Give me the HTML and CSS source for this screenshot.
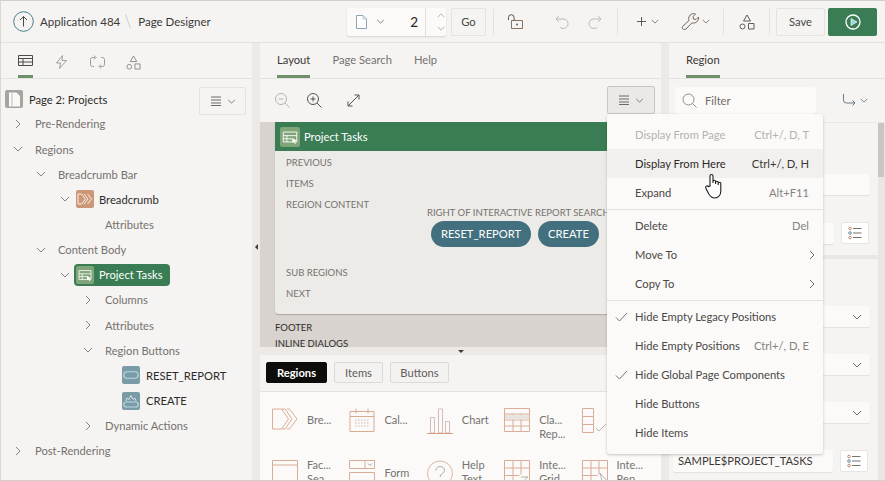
FILE: index.html
```html
<!DOCTYPE html>
<html lang="en">
<head>
<meta charset="utf-8">
<title>Page Designer</title>
<link rel="stylesheet" href="styles.css">
</head>
<body>
<svg class="defs" width="0" height="0">
  <symbol id="chev-d" viewBox="0 0 10 6"><path d="M1 1l4 4 4-4" fill="none" stroke="currentColor"/></symbol>
  <symbol id="chev-r" viewBox="0 0 6 10"><path d="M1 1l4 4-4 4" fill="none" stroke="currentColor"/></symbol>
  <symbol id="menu" viewBox="0 0 12 10"><path d="M1 1h10M1 4h10M1 7h10M1 9.500h10" fill="none" stroke="currentColor"/></symbol>
  <symbol id="shapes" viewBox="0 0 16 16"><path d="M8 1l3.500 6h-7z M9.500 9.500h5.500v5.500h-5.500z" fill="none" stroke="currentColor"/><circle cx="3.500" cy="12.500" r="2.500" fill="none" stroke="currentColor"/></symbol>
  <symbol id="region" viewBox="0 0 20 20"><g fill="none" stroke="#fff"><path d="M2.500 4.500h15v11h-15zM2.500 8.500h15M6.500 8.500v7M2.500 12h10"/></g><path d="M12.500 11l5 3-2 .8 1 2.500-1 .4-1-2.500-2 1z" fill="#fff"/></symbol>
  <symbol id="list" viewBox="0 0 14 14"><g fill="none"><circle cx="2" cy="2.500" r="1.300" stroke="#b98a70"/><circle cx="2" cy="7" r="1.300" stroke="#6b8aa0"/><circle cx="2" cy="11.500" r="1.300" stroke="#b98a70"/><path d="M5 2.500h8.500M5 7h8.500M5 11.500h8.500" stroke="#77736f"/></g></symbol>
</svg>

<div class="app">
  <header class="topbar">
    <svg class="up" width="21" height="21" viewBox="0 0 21 21"><circle cx="10.500" cy="10.500" r="9.800" fill="none" stroke="#4b7c8a"/><path d="M10.500 15.500v-10M7 9l3.500-3.500L14 9" fill="none" stroke="#4a4846"/></svg>
    <span class="crumb">Application 484</span>
    <svg class="slash" width="6" height="15" viewBox="0 0 6 15"><path d="M.5.500l5 14" stroke="#cfccc8" fill="none"/></svg>
    <span class="crumb">Page Designer</span>

    <div class="tools">
      <div class="pagepick">
        <svg width="11" height="14" viewBox="0 0 11 14"><path d="M.5.500h6.500l3.500 3.500v9.500h-10z" fill="#fff" stroke="#8da3b3"/><path d="M7 .5v3.500h3.500" fill="none" stroke="#b9c6cf"/></svg>
        <svg class="ch" width="9" height="5"><use href="#chev-d"/></svg>
        <span class="pagenum">2</span>
        <span class="spin">
          <svg class="ch ltg" width="8" height="5"><use href="#chev-d" transform="rotate(180 4 2.500)"/></svg>
          <svg class="ch ltg" width="8" height="5"><use href="#chev-d"/></svg>
        </span>
      </div>
      <button class="btn go">Go</button>
      <i class="vr v1"></i>
      <svg class="ic unlock" width="15" height="15" viewBox="0 0 15 15"><path d="M.5 6V3.500a2.800 2.800 0 0 1 5.600 0V6" fill="none" stroke="#55524f"/><path d="M3.500 6.500h11v8h-11z" fill="none" stroke="#8b6f63"/><circle cx="9" cy="10.500" r=".9" fill="#55524f"/></svg>
      <svg class="ic undo" width="15" height="14" viewBox="0 0 15 14"><path d="M4 1L1 4l3 3M1 4h8a5 4.800 0 1 1-4 8.500" fill="none" stroke="#bdbab6"/></svg>
      <svg class="ic redo" width="15" height="14" viewBox="0 0 15 14"><path d="M11 1l3 3-3 3M14 4H6a5 4.800 0 1 0 4 8.500" fill="none" stroke="#bdbab6"/></svg>
      <i class="vr v2"></i>
      <svg class="ic plus" width="9" height="9" viewBox="0 0 9 9"><path d="M4.500 0v9M0 4.500h9" stroke="#5c5a57" fill="none"/></svg>
      <svg class="ch c-plus" width="8" height="5"><use href="#chev-d"/></svg>
      <svg class="ic wrench" width="19" height="19" viewBox="0 0 19 19"><path d="M1.500 14.500L8 8.500C7 5.500 8.500 2 12.500 1.500c1 0 1.500.2 2 .5L12 4.500l.5 2.500 2.500.5L17.500 5c.5 3-1.500 6-5 6-.5 0-1 0-1.500-.2L5 17c-2 1.500-4.800-.5-3.500-2.500z" fill="none" stroke="#77605a"/></svg>
      <svg class="ch c-wr" width="8" height="5"><use href="#chev-d"/></svg>
      <i class="vr v3"></i>
      <svg class="ic sh" width="16" height="16"><use href="#shapes"/></svg>
      <i class="vr v4"></i>
      <button class="btn save">Save</button>
      <button class="run" aria-label="Run"><svg width="16" height="16" viewBox="0 0 16 16"><circle cx="8" cy="8" r="7" fill="none" stroke="#fff" stroke-width="1.300"/><path d="M6 4.500L12 8l-6 3.500z" fill="#9bd8e0" stroke="#fff" stroke-width=".6"/></svg></button>
    </div>
  </header>

  <main class="main">
    <aside class="left">
      <div class="tabs lefttabs">
        <span class="itab on"><svg width="15" height="11" viewBox="0 0 15 11"><path d="M.5.500h14v10H.5zM.5 3.500h14M.5 7h14M5 3.500V10.500" fill="none" stroke="#4c4a48"/></svg></span>
        <span class="itab"><svg width="11" height="14" viewBox="0 0 11 14"><path d="M6.500.500L.5 8h4l-1 5.500L10.500 5.500h-4.500z" fill="none" stroke="#a19e9b"/></svg></span>
        <span class="itab"><svg width="15" height="14" viewBox="0 0 15 14"><path d="M5 2.500H2.500a2 2 0 0 0-2 2v5a2 2 0 0 0 2 2H4M10 11.500h2.500a2 2 0 0 0 2-2v-5a2 2 0 0 0-2-2H11M4 .5l2 2-2 2M11 9.500l-2 2 2 2" fill="none" stroke="#a09a9e"/></svg></span>
        <span class="itab"><svg width="15" height="15" class="muted"><use href="#shapes"/></svg></span>
      </div>
      <div class="treehead">
        <span class="pageicon"><svg width="13" height="15" viewBox="0 0 13 15"><path d="M1 .5h7.500l3.500 3.500v10.500H1z" fill="#fbf9f7"/><path d="M4 .5v14" stroke="#c9b8b2"/></svg></span>
        <span class="pagetitle">Page 2: Projects</span>
        <button class="menubtn"><svg class="gly" width="12" height="10"><use href="#menu"/></svg><svg class="ch" width="9" height="5"><use href="#chev-d"/></svg></button>
      </div>
      <ul class="tree">
        <li class="row l0"><svg class="tw" width="6" height="10"><use href="#chev-r"/></svg>Pre-Rendering</li>
        <li class="row l0"><svg class="tw" width="10" height="6"><use href="#chev-d"/></svg>Regions</li>
        <li class="row l1"><svg class="tw" width="10" height="6"><use href="#chev-d"/></svg>Breadcrumb Bar</li>
        <li class="row l2"><svg class="tw" width="10" height="6"><use href="#chev-d"/></svg><span class="nodeicon tan"><svg width="16" height="12" viewBox="0 0 16 12"><path d="M1 1h3.500l4 5-4 5H1l0-10zM7 1l4 5-4 5M10.500 1l4 5-4 5" fill="none" stroke="#fbeee6"/></svg></span><b>Breadcrumb</b></li>
        <li class="row l3 noarrow">Attributes</li>
        <li class="row l1"><svg class="tw" width="10" height="6"><use href="#chev-d"/></svg>Content Body</li>
        <li class="row l2"><svg class="tw" width="10" height="6"><use href="#chev-d"/></svg><span class="pill"><span class="nodeicon gr"><svg width="16" height="16"><use href="#region"/></svg></span>Project Tasks</span></li>
        <li class="row l3"><svg class="tw" width="6" height="10"><use href="#chev-r"/></svg>Columns</li>
        <li class="row l3"><svg class="tw" width="6" height="10"><use href="#chev-r"/></svg>Attributes</li>
        <li class="row l3"><svg class="tw" width="10" height="6"><use href="#chev-d"/></svg>Region Buttons</li>
        <li class="row l4"><span class="nodeicon teal"><svg width="16" height="8" viewBox="0 0 16 8"><rect x=".75" y=".75" width="14.500" height="6.500" rx="3.200" fill="none" stroke="#b9d9e3" stroke-width="1.200"/></svg></span><b>RESET_REPORT</b></li>
        <li class="row l4"><span class="nodeicon teal"><svg width="16" height="14" viewBox="0 0 16 14"><rect x=".75" y="8" width="14.500" height="5" rx="2.500" fill="none" stroke="#b9d9e3" stroke-width="1.200"/><path d="M3 7l1-3 2 1.500L8 1.500l2 4 2-1.500 1 3" fill="none" stroke="#d6dfe0"/></svg></span><b>CREATE</b></li>
        <li class="row l3"><svg class="tw" width="6" height="10"><use href="#chev-r"/></svg>Dynamic Actions</li>
        <li class="row l0"><svg class="tw" width="6" height="10"><use href="#chev-r"/></svg>Post-Rendering</li>
      </ul>
    </aside>

    <div class="gutter v"><i class="tri-l"></i></div>

    <section class="center">
      <div class="tabs ctabs">
        <span class="tab on">Layout</span>
        <span class="tab">Page Search</span>
        <span class="tab">Help</span>
      </div>
      <div class="ctool">
        <svg class="z1" width="15" height="15" viewBox="0 0 15 15"><circle cx="6" cy="6" r="5.500" fill="none" stroke="#b5b2ae"/><path d="M3.500 6h5M10 10l4.500 4.500" stroke="#b5b2ae" fill="none"/></svg>
        <svg class="z2" width="15" height="15" viewBox="0 0 15 15"><circle cx="6" cy="6" r="5.500" fill="none" stroke="#55534f"/><path d="M3.500 6h5M6 3.500v5M10 10l4.500 4.500" stroke="#55534f" fill="none"/></svg>
        <svg class="z3" width="13" height="13" viewBox="0 0 13 13"><path d="M1 12L12 1M7.500 1H12v4.500M1 7.500V12h4.500" fill="none" stroke="#55534f"/></svg>
        <button class="menubtn pressed"><svg class="gly" width="12" height="10"><use href="#menu"/></svg><svg class="ch" width="9" height="5"><use href="#chev-d"/></svg></button>
      </div>
      <div class="canvas">
        <div class="card">
          <div class="cardhead"><span class="nodeicon gr big"><svg width="18" height="18"><use href="#region"/></svg></span>Project Tasks</div>
          <div class="cardbody">
            <div class="slots">
              <div class="slot">PREVIOUS</div>
              <div class="slot">ITEMS</div>
              <div class="slot">REGION CONTENT</div>
              <div class="slot gap">SUB REGIONS</div>
              <div class="slot">NEXT</div>
            </div>
            <div class="rslot">
              <div class="slot nw">RIGHT OF INTERACTIVE REPORT SEARCH BAR</div>
              <div class="pills"><span class="rb">RESET_REPORT</span><span class="rb">CREATE</span></div>
            </div>
          </div>
        </div>
        <div class="cfoot">FOOTER</div>
        <div class="cfoot">INLINE DIALOGS</div>
      </div>
      <div class="gutter h"><i class="tri-d"></i></div>
      <div class="gallery">
        <div class="gtabs">
          <span class="gt on">Regions</span><span class="gt">Items</span><span class="gt">Buttons</span>
        </div>
        <div class="ggrid">
          <div class="gi"><svg width="26" height="22" viewBox="0 0 26 22"><path d="M.5 1h9l7 10-7 10h-9l0-20zM10 1h3l7 10-7 10h-3M15 1h2.500L25 11l-7.500 10H15" fill="none" stroke="#dcae96"/></svg><span>Bre...</span></div>
          <div class="gi"><svg width="26" height="25" viewBox="0 0 26 25"><path d="M1 3.500h24v20H1zM1 8.500h24M7 .5v5M19 .5v5" fill="none" stroke="#d8ab93"/><path d="M6 12h15M6 15h15M6 18h15" stroke="#d3b8a8" stroke-dasharray="1.500 1.500" fill="none"/></svg><span>Cal...</span></div>
          <div class="gi"><svg width="26" height="26" viewBox="0 0 26 26"><path d="M3.500 9.500h4V25h-4zM11.500 1h4v24h-4zM18.500 13.500h4V25h-4z" fill="none" stroke="#d2bdb8"/><path d="M0 25.500h26" stroke="#d99a7c"/></svg><span>Chart</span></div>
          <div class="gi"><svg width="26" height="24" viewBox="0 0 26 24"><path d="M.5.500h25v23H.5zM.5 6h25M.5 12h25M.5 18h25M9 6v17.500M17 6v17.500" fill="none" stroke="#d9ad97"/><path d="M1 7h24v4.500H1z" fill="#e8e4e1"/></svg><span>Cla...<br>Rep...</span></div>
          <div class="gi"><svg width="26" height="25" viewBox="0 0 26 25"><path d="M.5.500h11v24H.5zM.5 8.500h11M.5 16.500h11" fill="none" stroke="#d9ad97"/><path d="M14 20l3 3 7-7" fill="none" stroke="#b8b5b2"/></svg><span></span></div>
          <div class="gi r2"><svg width="26" height="28" viewBox="0 0 26 28"><path d="M.5.500h25v27H.5zM.5 5h25" fill="none" stroke="#d9ad97"/></svg><span>Fac...<br>Sea...</span></div>
          <div class="gi r2"><svg width="26" height="28" viewBox="0 0 26 28"><path d="M.5.500h25v8H.5zM16 .5v8M.5 12.500h25V28H.5z" fill="none" stroke="#d9ad97"/><path d="M19 3.500l2 2 2-2" fill="none" stroke="#a9a5a2"/></svg><span class="mid">Form</span></div>
          <div class="gi r2"><svg width="26" height="28" viewBox="0 0 26 28"><circle cx="13" cy="13.500" r="12.500" fill="none" stroke="#dcb8a6"/><path d="M9 10.500c0-5.500 8.500-5 8.500 0 0 3-4.500 3-4.500 6.500" fill="none" stroke="#b5a39f"/></svg><span>Help<br>Text</span></div>
          <div class="gi r2"><svg width="26" height="28" viewBox="0 0 26 28"><path d="M.5.500h25v22H.5zM.5 8h25M.5 15.500h15M9 .5v24M17 .5v14" fill="none" stroke="#d9ad97"/><path d="M17 17h7l-3.500 3v6" fill="none" stroke="#b5b2ae"/></svg><span>Inte...<br>Grid</span></div>
          <div class="gi r2"><svg width="26" height="28" viewBox="0 0 26 28"><path d="M.5.500h25v22H.5zM.5 8h25M.5 15.500h15M9 .5v24M17 .5v14" fill="none" stroke="#d9ad97"/><path d="M18 13l8 9-4 1v5z" fill="#fbfaf8" stroke="#b5b2ae"/></svg><span>Inte...<br>Rep...</span></div>
        </div>
      </div>
    </section>

    <div class="gutter v"></div>

    <aside class="right">
      <div class="tabs rtabs"><span class="tab on">Region</span></div>
      <div class="rtool">
        <div class="filter"><svg width="15" height="15" viewBox="0 0 15 15"><circle cx="6.500" cy="6.500" r="5.500" fill="none" stroke="#8e8b88"/><path d="M10.500 10.500l4 4" stroke="#8e8b88" fill="none"/></svg><span>Filter</span></div>
        <svg class="goto" width="13" height="12" viewBox="0 0 13 12"><path d="M.5 0v6a3 3 0 0 0 3 3H12M9.500 6.500L12 9l-2.500 2.500" fill="none" stroke="#6d7a85"/></svg>
        <svg class="ch" width="8" height="5"><use href="#chev-d"/></svg>
      </div>
      <div class="props">
        <div class="propgroup first">
          <div class="field f1"></div>
          <div class="fieldrow f2"><div class="field"></div><span class="lbtn"><svg width="14" height="14"><use href="#list"/></svg></span></div>
        </div>
        <div class="propgroup">
          <div class="field sel s1"><svg class="ch" width="10" height="6"><use href="#chev-d"/></svg></div>
          <div class="field sel"><svg class="ch" width="10" height="6"><use href="#chev-d"/></svg></div>
          <div class="field sel"><svg class="ch" width="10" height="6"><use href="#chev-d"/></svg></div>
          <div class="fieldrow f3"><div class="field val">SAMPLE$PROJECT_TASKS</div><span class="lbtn"><svg width="14" height="14"><use href="#list"/></svg></span></div>
        </div>
        <div class="scroll"><i></i></div>
      </div>
    </aside>
  </main>

  <div class="popmenu">
    <div class="mi dis"><span>Display From Page</span><kbd>Ctrl+/, D, T</kbd></div>
    <div class="mi hot"><span>Display From Here</span><kbd>Ctrl+/, D, H</kbd></div>
    <div class="mi"><span>Expand</span><kbd>Alt+F11</kbd></div>
    <hr>
    <div class="mi"><span>Delete</span><kbd>Del</kbd></div>
    <div class="mi"><span>Move To</span><svg class="ch sub" width="6" height="10"><use href="#chev-r"/></svg></div>
    <div class="mi"><span>Copy To</span><svg class="ch sub" width="6" height="10"><use href="#chev-r"/></svg></div>
    <hr>
    <div class="mi"><svg class="chk" width="13" height="10" viewBox="0 0 13 10"><path d="M1 5.500l3.500 3.500L12 1" fill="none" stroke="#77736f"/></svg><span>Hide Empty Legacy Positions</span></div>
    <div class="mi"><span>Hide Empty Positions</span><kbd>Ctrl+/, D, E</kbd></div>
    <div class="mi"><svg class="chk" width="13" height="10" viewBox="0 0 13 10"><path d="M1 5.500l3.500 3.500L12 1" fill="none" stroke="#77736f"/></svg><span>Hide Global Page Components</span></div>
    <div class="mi"><span>Hide Buttons</span></div>
    <div class="mi"><span>Hide Items</span></div>
  </div>

  <svg class="cursor" width="18" height="26" viewBox="0 0 18 26"><path d="M5 13V3a1.500 1.500 0 0 1 3 0v7V8.500a1.300 1.300 0 0 1 2.600 0V11 9.500a1.300 1.300 0 0 1 2.600 0V12v-1.500a1.300 1.300 0 0 1 2.600 0V18c0 4-2.500 7-6 7-3 0-4.500-1.500-6-4L1 15.500c-1-2 1-3.500 2.500-2z" fill="#fff" stroke="#1d1c1b" stroke-width="1.100"/></svg>
</div>
</body>
</html>
```

FILE: styles.css
```css
* { box-sizing: border-box; }
html, body { margin: 0; padding: 0; }
body {
  width: 885px; height: 481px; overflow: hidden;
  font-family: Lato, "Open Sans", sans-serif;
  font-size: 11.200px; color: #5f5d5a; background: #f5f4f2;
}
.defs { position: absolute; }
svg { display: block; flex: none; }
.ch { color: #6d6a67; }
.ltg { color: #a5a29f; }
.muted { color: #8d8a87; }
i { display: block; font-style: normal; }

.app {
  position: relative; width: 885px; height: 481px; overflow: hidden;
  display: flex; flex-direction: column;
  border-top: 1px solid #d2cfcb; border-left: 1px solid #dad7d3; border-bottom: 1px solid #d2cfcb;
}

/* top bar */
.topbar {
  flex: none; height: 42px; display: flex; align-items: center; padding-left: 12px;
  background: #f5f4f2; border-bottom: 1px solid #e4e2df;
}
.up { margin-right: 6px; }
.crumb { font-size: 11.500px; color: #3b3937; }
.slash { margin: 0 7px 0 5px; }
.tools { margin-left: auto; display: flex; align-items: center; padding-right: 8px; }
.pagepick {
  width: 99px; height: 28px; display: flex; align-items: center; padding-left: 9px;
  background: #fbfaf8; box-shadow: 0 1px 2px rgba(0,0,0,.14); border-radius: 2px;
}
.pagepick .ch { margin-left: 9px; }
.pagenum { margin-left: auto; font-size: 13.500px; color: #262524; padding-right: 7px; }
.spin {
  width: 21px; height: 28px; border-left: 1px solid #e2e0dd;
  display: flex; flex-direction: column; align-items: center; justify-content: center; gap: 8px;
}
.btn {
  font: inherit; height: 28px; background: #f5f4f2; border: 1px solid #e5e3e0; border-radius: 2px;
  color: #4a4846; padding: 0;
}
.go { width: 35px; margin-left: 5px; }
.vr { width: 1px; height: 26px; background: #e4e2df; }
.v1 { margin-left: 7px; }
.unlock { margin-left: 14px; }
.undo { margin-left: 32px; }
.redo { margin-left: 17px; }
.v2 { margin-left: 15px; }
.plus { margin-left: 19px; }
.c-plus { margin-left: 5px; }
.wrench { margin-left: 22px; }
.c-wr { margin-left: 2px; }
.v3 { margin-left: 13px; }
.sh { margin-left: 15px; }
.v4 { margin-left: 14px; }
.save { width: 49px; margin-left: 6px; }
.run {
  width: 49px; height: 28px; margin-left: 3px; padding: 0; border: 0; border-radius: 2px;
  background: #3a7d54; display: flex; align-items: center; justify-content: center;
}

/* main */
.main { flex: 1; min-height: 0; display: flex; }
.left { width: 251px; flex: none; display: flex; flex-direction: column; }
.gutter { background: #ece9e6; flex: none; display: flex; align-items: center; justify-content: center; }
.gutter.v { width: 8px; }
.gutter.h { height: 8px; }
.tri-l { width: 0; height: 0; border: 3.500px solid transparent; border-right-color: #3d3b39; border-left: 0; margin-top: -30px; }
.tri-d { width: 0; height: 0; border: 3.500px solid transparent; border-top-color: #3d3b39; border-bottom: 0; }
.center { width: 401px; flex: none; display: flex; flex-direction: column; }
.right { flex: 1; min-width: 0; display: flex; flex-direction: column; }

.tabs { height: 36px; flex: none; display: flex; border-bottom: 1px solid #e4e2df; }
.lefttabs { padding-left: 17px; gap: 21px; }
.itab { width: 15px; height: 35px; display: flex; justify-content: center; padding-top: 12px; }
.itab.on { box-shadow: inset 0 -3px 0 #6f9068; }
.ctabs { padding-left: 17px; gap: 22px; }
.rtabs { padding-left: 17px; }
.tab { height: 35px; line-height: 34px; color: #75726f; }
.tab.on { color: #3b3937; box-shadow: inset 0 -3px 0 #6f9068; }

/* tree */
.treehead { height: 44px; flex: none; display: flex; align-items: center; padding-left: 4px; position: relative; }
.pageicon {
  width: 18px; height: 18px; background: #a8a39e; border-radius: 2px;
  display: flex; align-items: center; justify-content: center; margin: 0 6px 4px 0;
}
.pagetitle { color: #2c2b29; margin-bottom: 4px; }
.menubtn {
  width: 47px; height: 28px; padding: 0; background: transparent; border: 1px solid #e5e3e0; border-radius: 2px;
  display: flex; align-items: center; justify-content: center; gap: 5px; color: #6d6a67;
}
.treehead .menubtn { margin-left: auto; margin-right: 6px; }
.tree { list-style: none; margin: -11.600px 0 0; padding: 0; }
.row { height: 25.150px; display: flex; align-items: center; color: #75726f; white-space: nowrap; }
.row b { font-weight: 400; color: #2c2b29; }
.tw { color: #85827f; }
.tw[width="6"] { margin-left: 2px; margin-right: 14px; }
.tw[width="10"] { margin-right: 12px; }
.l0 { padding-left: 12px; }
.l1 { padding-left: 35px; }
.l2 { padding-left: 59px; }
.l2 .tw[width="10"] { margin-right: 6px; }
.l3 { padding-left: 82px; }
.l4 { padding-left: 121px; }
.l3.noarrow { padding-left: 104px; }
.nodeicon {
  width: 18px; height: 18px; border-radius: 2px; display: flex; align-items: center; justify-content: center;
  margin-right: 5px; flex: none;
}
.l4 .nodeicon { margin-right: 6px; }
.tan { background: #cb9877; }
.teal { background: #7a9ca6; }
.gr { background: #7fa579; }
.pill {
  display: flex; align-items: center; height: 22px; width: 96px; margin-left: -2px; padding-left: 2px;
  background: #3a7d54; border-radius: 4px; color: #fff;
}

/* center */
.ctool { height: 43px; flex: none; position: relative; display: flex; align-items: center; padding-left: 15px; }
.z2 { margin-left: 17px; }
.z3 { margin-left: 25px; }
.ctool .menubtn { margin-left: auto; margin-right: 6px; width: 48px; margin-top: -1px; }
.pressed { background: #ebe9e6; border-color: #c9c6c2; }
.canvas { height: 225px; flex: none; background: #d8d3cf; overflow: hidden; padding-left: 15px; }
.card {
  height: 192px; width: 372px; background: #edebe7; border-radius: 0 0 4px 4px;
  box-shadow: 0 1px 1px rgba(0,0,0,.2);
}
.cardhead {
  height: 29px; background: #3a7d54; color: #fff; display: flex; align-items: center; padding-left: 5px;
}
.nodeicon.big { width: 20px; height: 20px; margin-right: 4px; }
.cardbody { display: flex; padding-left: 11px; }
.slots { width: 141px; flex: none; padding-top: 1px; }
.slot { height: 21px; line-height: 21px; font-size: 9.500px; color: #75726f; }
.slot.gap { margin-top: 47px; }
.nw { white-space: nowrap; }
.rslot { padding-top: 51px; }
.pills { display: flex; gap: 7px; margin-left: 4px; margin-top: -2px; }
.rb {
  height: 26px; line-height: 25px; border-radius: 13px; text-align: center;
  background: #43707e; color: #fff; white-space: nowrap; width: 100px;
}
.rb + .rb { width: 61px; }
.cfoot { height: 16px; line-height: 16px; font-size: 9.500px; color: #2c2b29; }
.card + .cfoot { margin-top: 6px; }

.gallery { flex: 1; min-height: 0; background: #fbfaf8; overflow: hidden; }
.gtabs {
  height: 37px; background: #f5f4f2; border-bottom: 1px solid #e4e2df;
  display: flex; gap: 7px; padding: 7px 0 0 6px;
}
.gt {
  height: 21px; line-height: 19px; border: 1px solid #dcdad6; border-radius: 2px; text-align: center;
  color: #5f5d5a; background: #f3f2f0; width: 49px;
}
.gt.on { background: #0d0c0b; border-color: #0d0c0b; color: #fff; font-weight: 700; width: 61px; }
.gt:last-child { width: 59px; }
.ggrid {
  display: grid; grid-template-columns: repeat(5, 77.400px); grid-auto-rows: 52px;
  padding: 16px 0 0 12px;
}
.gi { display: flex; align-items: flex-start; gap: 9px; line-height: 14px; font-size: 11px; color: #75726f; }
.gi svg { width: 26px; }
.gi span { padding-top: 5px; white-space: nowrap; }
.gi.r2 span { padding-top: 0; margin-top: -2px; }
.gi.r2 span.mid { margin-top: 6px; }

/* right */
.rtool { height: 43px; flex: none; display: flex; align-items: center; padding: 0 0 1px 6px; }
.filter {
  width: 141px; height: 27px; background: #fbfaf8; border-radius: 2px; box-shadow: 0 1px 1px rgba(0,0,0,.07);
  display: flex; align-items: center; gap: 8px; padding-left: 7px; color: #6e6b68;
}
.goto { margin-left: 27px; margin-right: 4px; }
.props { position: relative; flex: 1; min-height: 0; background: #e9e7e3; padding-top: 1px; overflow: hidden; padding-right: 7px; }
.propgroup { background: #f5f4f2; }
.propgroup.first { height: 132px; padding-top: 51px; margin-bottom: 4px; }
.field { height: 21px; background: #fbfaf8; border-radius: 2px; box-shadow: 0 1px 1px rgba(0,0,0,.08); margin-left: 4px; margin-right: 8px; }
.fieldrow { display: flex; align-items: center; }
.fieldrow .field { flex: 1; margin-right: 7px; }
.f2 { margin-top: 27px; }
.lbtn {
  width: 28px; height: 22px; background: #fff; border: 1px solid #e8e6e3; border-radius: 2px;
  display: flex; align-items: center; justify-content: center; margin-right: 10px; flex: none;
}
.f2 .lbtn { margin-right: 9px; }
.sel { display: flex; align-items: center; justify-content: flex-end; padding-right: 8px; margin-bottom: 27px; }
.propgroup:not(.first) { padding-top: 47px; height: 230px; }
.val { height: 22px; line-height: 22px; padding-left: 5px; color: #3b3937; white-space: nowrap; }
.scroll { position: absolute; right: 0; top: 0; bottom: 0; width: 7px; background: #e9e7e3; }
.scroll i { width: 6px; height: 54px; margin-top: 1px; background: #c9c5c1; }

/* menu */
.popmenu {
  position: absolute; left: 606px; top: 113px; width: 216px; height: 340px; padding-top: 6px;
  background: #fbfaf8; border-radius: 3px; box-shadow: 0 1px 3px rgba(0,0,0,.22);
}
.mi {
  height: 29px; display: flex; align-items: center; padding: 0 14px 0 28px; position: relative; color: #4a4846;
  white-space: nowrap;
}
.mi kbd { margin-left: auto; font: inherit; color: #85827f; }
.mi.dis, .mi.dis kbd { color: #b5b2ae; }
.mi.hot { background: #f1f0ee; color: #2c2b29; }
.mi.hot kbd { color: #3b3937; }
.mi .sub { margin-left: auto; margin-right: -6px; }
.chk { position: absolute; left: 8px; top: 10px; }
.popmenu hr { margin: 2px 0 1px; border: 0; border-top: 1px solid #e4e2df; height: 1px; }
.cursor { position: absolute; left: 704px; top: 172px; }
```
